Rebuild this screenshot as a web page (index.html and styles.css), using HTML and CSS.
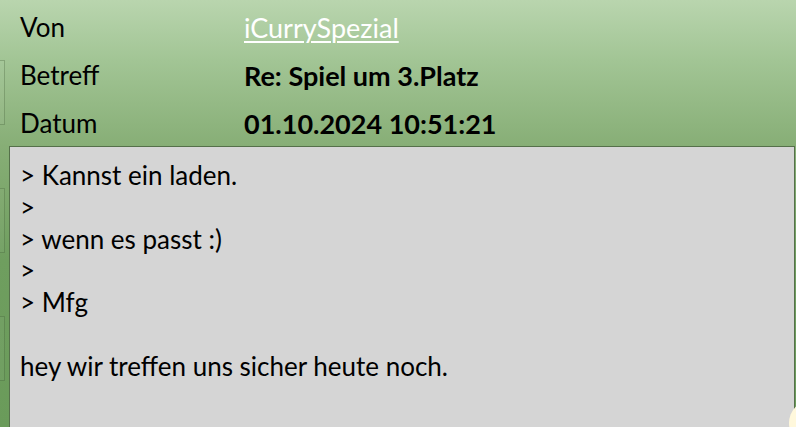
FILE: index.html
```html
<!DOCTYPE html>
<html lang="de">
<head>
<meta charset="utf-8">
<title>Nachricht</title>
<link rel="stylesheet" href="styles.css">
</head>
<body>
<div class="page">
  <div class="rail">
    <div class="rail-box"></div>
    <div class="rail-box"></div>
    <div class="rail-box"></div>
  </div>
  <div class="content">
    <div class="header">
      <div class="label">Von</div>
      <div class="value"><a class="sender" href="#">iCurrySpezial</a></div>
      <div class="label">Betreff</div>
      <div class="value strong">Re: Spiel um 3.Platz</div>
      <div class="label">Datum</div>
      <div class="value strong">01.10.2024 10:51:21</div>
    </div>
    <div class="message">
      <p class="line">&gt; Kannst ein laden.</p>
      <p class="line">&gt;</p>
      <p class="line">&gt; wenn es passt :)</p>
      <p class="line">&gt;</p>
      <p class="line">&gt; Mfg</p>
      <p class="line">&nbsp;</p>
      <p class="line">hey wir treffen uns sicher heute noch.</p>
    </div>
  </div>
  <div class="bubble"></div>
</div>
</body>
</html>
```

FILE: styles.css
```css
html, body {
  margin: 0;
  padding: 0;
}
body {
  width: 796px;
  height: 427px;
  overflow: hidden;
  font-family: Lato, "Noto Sans", sans-serif;
  color: #000;
}
.page {
  position: relative;
  display: flex;
  height: 427px;
  overflow: hidden;
  background: linear-gradient(to bottom, #b9d5ae 0px, #a2c595 60px, #87ae76 146px, #6f9e5f 260px, #6a9b5a 427px);
}
.rail {
  width: 9px;
  flex: none;
  display: flex;
  flex-direction: column;
  gap: 63px;
  padding-top: 60px;
  box-sizing: border-box;
}
.rail-box {
  width: 4px;
  height: 63px;
  border: 1px solid rgba(50, 80, 40, 0.28);
  border-left: none;
  background: rgba(255, 255, 255, 0.04);
}
.content {
  flex: 1;
  display: flex;
  flex-direction: column;
  padding-right: 1px;
}
.header {
  display: grid;
  grid-template-columns: 224px 1fr;
  grid-auto-rows: 48px;
  align-items: center;
  padding: 3px 0 0 11px;
  height: 146px;
  box-sizing: border-box;
  font-size: 26px;
}
.label {
  font-weight: 400;
}
.value {
  font-size: 27px;
}
.value.strong {
  font-weight: 700;
}
.sender {
  color: #fff;
  text-decoration: underline;
  text-underline-offset: 3px;
  text-decoration-thickness: 1.5px;
}
.message {
  flex: 1;
  background: #d5d5d5;
  border: 1px solid #55704a;
  border-bottom: none;
  padding: 13px 10px 0 10px;
  font-size: 26px;
  line-height: 31.8px;
}
.line {
  margin: 0;
}
.bubble {
  position: absolute;
  left: 789px;
  top: 400px;
  width: 46px;
  height: 46px;
  border-radius: 50%;
  background: #fff8dc;
}
```
